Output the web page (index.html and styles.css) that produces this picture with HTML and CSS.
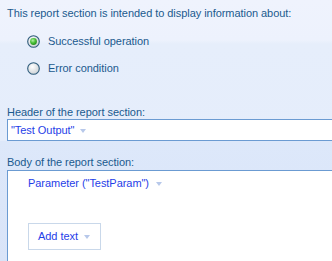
FILE: index.html
```html
<!DOCTYPE html>
<html>
<head>
<meta charset="utf-8">
<link rel="stylesheet" href="styles.css">
</head>
<body>
<div class="page">
  <p class="intro">This report section is intended to display information about:</p>
  <div class="radios">
    <div class="radio">
      <svg width="13" height="13" viewBox="0 0 13 13">
        <defs>
          <radialGradient id="rg1" cx="0.4" cy="0.35" r="0.7">
            <stop offset="0" stop-color="#ffffff"/>
            <stop offset="1" stop-color="#c9cfd2"/>
          </radialGradient>
          <radialGradient id="gr" cx="0.4" cy="0.35" r="0.7">
            <stop offset="0" stop-color="#b6f0a6"/>
            <stop offset="0.5" stop-color="#4dc23a"/>
            <stop offset="1" stop-color="#1f8a18"/>
          </radialGradient>
        </defs>
        <circle cx="6.5" cy="6.5" r="5.8" fill="url(#rg1)" stroke="#2f5c7c" stroke-width="1.1"/>
        <circle cx="6.5" cy="6.5" r="3.4" fill="url(#gr)"/>
      </svg>
      <span>Successful operation</span>
    </div>
    <div class="radio">
      <svg width="13" height="13" viewBox="0 0 13 13">
        <defs>
          <radialGradient id="rg2" cx="0.4" cy="0.35" r="0.75">
            <stop offset="0" stop-color="#ffffff"/>
            <stop offset="1" stop-color="#c6ccd0"/>
          </radialGradient>
        </defs>
        <circle cx="6.5" cy="6.5" r="5.8" fill="url(#rg2)" stroke="#2f5c7c" stroke-width="1.1"/>
      </svg>
      <span>Error condition</span>
    </div>
  </div>
  <div class="label header-label">Header of the report section:</div>
  <div class="input"><span class="value">"Test Output"</span><span class="arrow"></span></div>
  <div class="label body-label">Body of the report section:</div>
  <div class="body-box">
    <div class="param"><span class="value">Parameter ("TestParam")</span><span class="arrow wide"></span></div>
    <div class="add-btn"><span class="value">Add text</span><span class="arrow"></span></div>
  </div>
</div>
</body>
</html>
```
FILE: styles.css
```css
html, body {
  margin: 0;
  padding: 0;
  height: 100%;
  overflow: hidden;
}
body {
  font-family: "Liberation Sans", Arial, sans-serif;
  font-size: 11px;
  line-height: 13px;
  letter-spacing: -0.05px;
  color: #1b5a8e;
  background: linear-gradient(to bottom,
    #eff3fd 0px, #edf2fd 40px,
    #e6eefb 44px, #e5edfb 141px,
    #dde8fa 141px, #d9e4f8 261px);
}
.page {
  display: flex;
  flex-direction: column;
  padding: 7px 0 0 7px;
  height: 100%;
  box-sizing: border-box;
}
.intro {
  margin: 0;
}
.radios {
  display: flex;
  flex-direction: column;
  padding-left: 20px;
  margin-top: 8px;
}
.radio {
  display: flex;
  align-items: center;
  gap: 8px;
  height: 27px;
}
.radio svg {
  display: block;
  flex: none;
}
.label {
  height: 13px;
}
.header-label {
  margin-top: 24px;
}
.input {
  display: flex;
  align-items: center;
  height: 20px;
  border: 1px solid #6b9bd2;
  border-right: none;
  background: #fff;
  padding-left: 3px;
  margin-right: -10px;
}
.value {
  color: #1f3ee8;
}
.arrow {
  display: inline-block;
  width: 0;
  height: 0;
  border-left: 3.5px solid transparent;
  border-right: 3.5px solid transparent;
  border-top: 4px solid #b7c8ea;
  margin-left: 6px;
  margin-top: 1px;
}
.arrow.wide {
  margin-left: 7px;
}
.body-label {
  margin-top: 15px;
}
.body-box {
  margin-top: 1px;
  flex: 1;
  background: #fff;
  border: 1px solid #6b9bd2;
  border-right: none;
  border-bottom: none;
  margin-right: -10px;
  padding: 6px 0 0 20px;
  display: flex;
  flex-direction: column;
  align-items: flex-start;
}
.param {
  display: flex;
  align-items: center;
}
.add-btn {
  margin-top: 33px;
  width: 62px;
  height: 25px;
  border: 1px solid #c9d8ea;
  display: flex;
  align-items: center;
  padding-left: 9px;
  box-sizing: content-box;
}
```
